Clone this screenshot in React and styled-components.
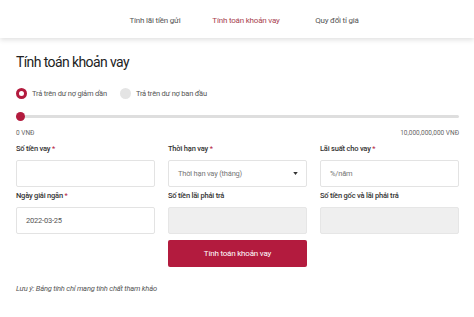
import React from "react";
import styled, { createGlobalStyle } from "styled-components";

const Global = createGlobalStyle`
  html, body { margin: 0; padding: 0; background: #fff; }
  body { font-family: Roboto, "Liberation Sans", sans-serif; color: #333; }
  * { box-sizing: border-box; }
`;

const Page = styled.div`
  width: 474px;
  height: 317px;
  overflow: hidden;
  background: #fff;
`;

const Nav = styled.div`
  height: 38px;
  display: flex;
  justify-content: center;
  align-items: center;
  padding-left: 18px;
  box-shadow: 0 2px 5px rgba(0,0,0,0.12);
  position: relative;
`;

const Tab = styled.div`
  width: 91px;
  text-align: center;
  font-size: 8px;
  letter-spacing: -0.2px;
  color: ${p => (p.$active ? "#a8424f" : "#555")};
  padding-top: 2px;
`;

const Main = styled.div`
  padding: 15px 15px 0 16px;
`;

const Title = styled.h1`
  margin: 0;
  font-size: 14px;
  letter-spacing: -0.6px;
  font-weight: 400;
  color: #222;
  line-height: 18px;
`;

const RadioRow = styled.div`
  display: flex;
  align-items: center;
  gap: 13px;
  margin-top: 16px;
  height: 12px;
`;

const RadioItem = styled.label`
  display: flex;
  align-items: center;
  gap: 5px;
  font-size: 7.5px;
  letter-spacing: -0.2px;
  color: #555;
`;

const Dot = styled.span`
  width: 11px;
  height: 11px;
  border-radius: 50%;
  background: ${p => (p.$on ? "#fff" : "#e4e4e4")};
  border: ${p => (p.$on ? "3.5px solid #b31b3e" : "none")};
`;

const Slider = styled.div`
  position: relative;
  margin-top: 13px;
  height: 9px;
  display: flex;
  align-items: center;
`;

const Track = styled.div`
  flex: 1;
  height: 3px;
  background: #dedede;
  border-radius: 2px;
`;

const Thumb = styled.span`
  position: absolute;
  left: 0;
  top: 0;
  width: 9px;
  height: 9px;
  border-radius: 50%;
  background: #b31b3e;
`;

const Range = styled.div`
  display: flex;
  justify-content: space-between;
  font-size: 6.5px;
  color: #666;
  margin-top: 8px;
`;

const Grid = styled.div`
  display: grid;
  grid-template-columns: repeat(3, 1fr);
  column-gap: 13px;
  row-gap: 3px;
  margin-top: 6px;
`;

const Field = styled.div`
  display: flex;
  flex-direction: column;
`;

const Label = styled.div`
  font-size: 7.5px;
  font-weight: 500;
  letter-spacing: -0.2px;
  color: #333;
  height: 12px;
  line-height: 12px;
  margin-bottom: 5px;
  span { color: #b31b3e; font-weight: 400; }
`;

const Box = styled.div`
  height: 27px;
  border: 1px solid ${p => (p.$disabled ? "#e6e6e6" : "#e3e3e3")};
  border-radius: 2px;
  background: ${p => (p.$disabled ? "#efefef" : "#fff")};
  display: flex;
  align-items: center;
  justify-content: space-between;
  padding: 0 8px 0 9px;
  font-size: 7.5px;
  letter-spacing: -0.2px;
  color: ${p => (p.$muted ? "#777" : "#555")};
`;

const Caret = styled.svg`
  width: 5px;
  height: 3px;
`;

const Button = styled.button`
  grid-column: 2;
  height: 27px;
  margin-top: 3px;
  border: none;
  border-radius: 2px;
  background: #b31b3e;
  color: #fff;
  font-family: inherit;
  font-size: 8px;
  letter-spacing: -0.2px;
`;

const Note = styled.div`
  margin-top: 17px;
  font-size: 7.5px;
  font-style: italic;
  letter-spacing: -0.2px;
  color: #555;
`;

export default function App() {
  return (
    <Page>
      <Global />
      <Nav>
        <Tab>Tính lãi tiền gửi</Tab>
        <Tab $active>Tính toán khoản vay</Tab>
        <Tab>Quy đổi tỉ giá</Tab>
      </Nav>
      <Main>
        <Title>Tính toán khoản vay</Title>
        <RadioRow>
          <RadioItem><Dot $on />Trả trên dư nợ giảm dần</RadioItem>
          <RadioItem><Dot />Trả trên dư nợ ban đầu</RadioItem>
        </RadioRow>
        <Slider>
          <Track />
          <Thumb />
        </Slider>
        <Range>
          <span>0 VNĐ</span>
          <span>10,000,000,000 VNĐ</span>
        </Range>
        <Grid>
          <Field>
            <Label>Số tiền vay <span>*</span></Label>
            <Box />
          </Field>
          <Field>
            <Label>Thời hạn vay <span>*</span></Label>
            <Box $muted>
              Thời hạn vay (tháng)
              <Caret viewBox="0 0 6 4"><path d="M0 0 L6 0 L3 4 Z" fill="#333" /></Caret>
            </Box>
          </Field>
          <Field>
            <Label>Lãi suất cho vay <span>*</span></Label>
            <Box $muted>%/năm</Box>
          </Field>
          <Field>
            <Label>Ngày giải ngân <span>*</span></Label>
            <Box>2022-03-25</Box>
          </Field>
          <Field>
            <Label>Số tiền lãi phải trả</Label>
            <Box $disabled />
          </Field>
          <Field>
            <Label>Số tiền gốc và lãi phải trả</Label>
            <Box $disabled />
          </Field>
          <Button>Tính toán khoản vay</Button>
        </Grid>
        <Note>Lưu ý: Bảng tính chỉ mang tính chất tham khảo</Note>
      </Main>
    </Page>
  );
}
